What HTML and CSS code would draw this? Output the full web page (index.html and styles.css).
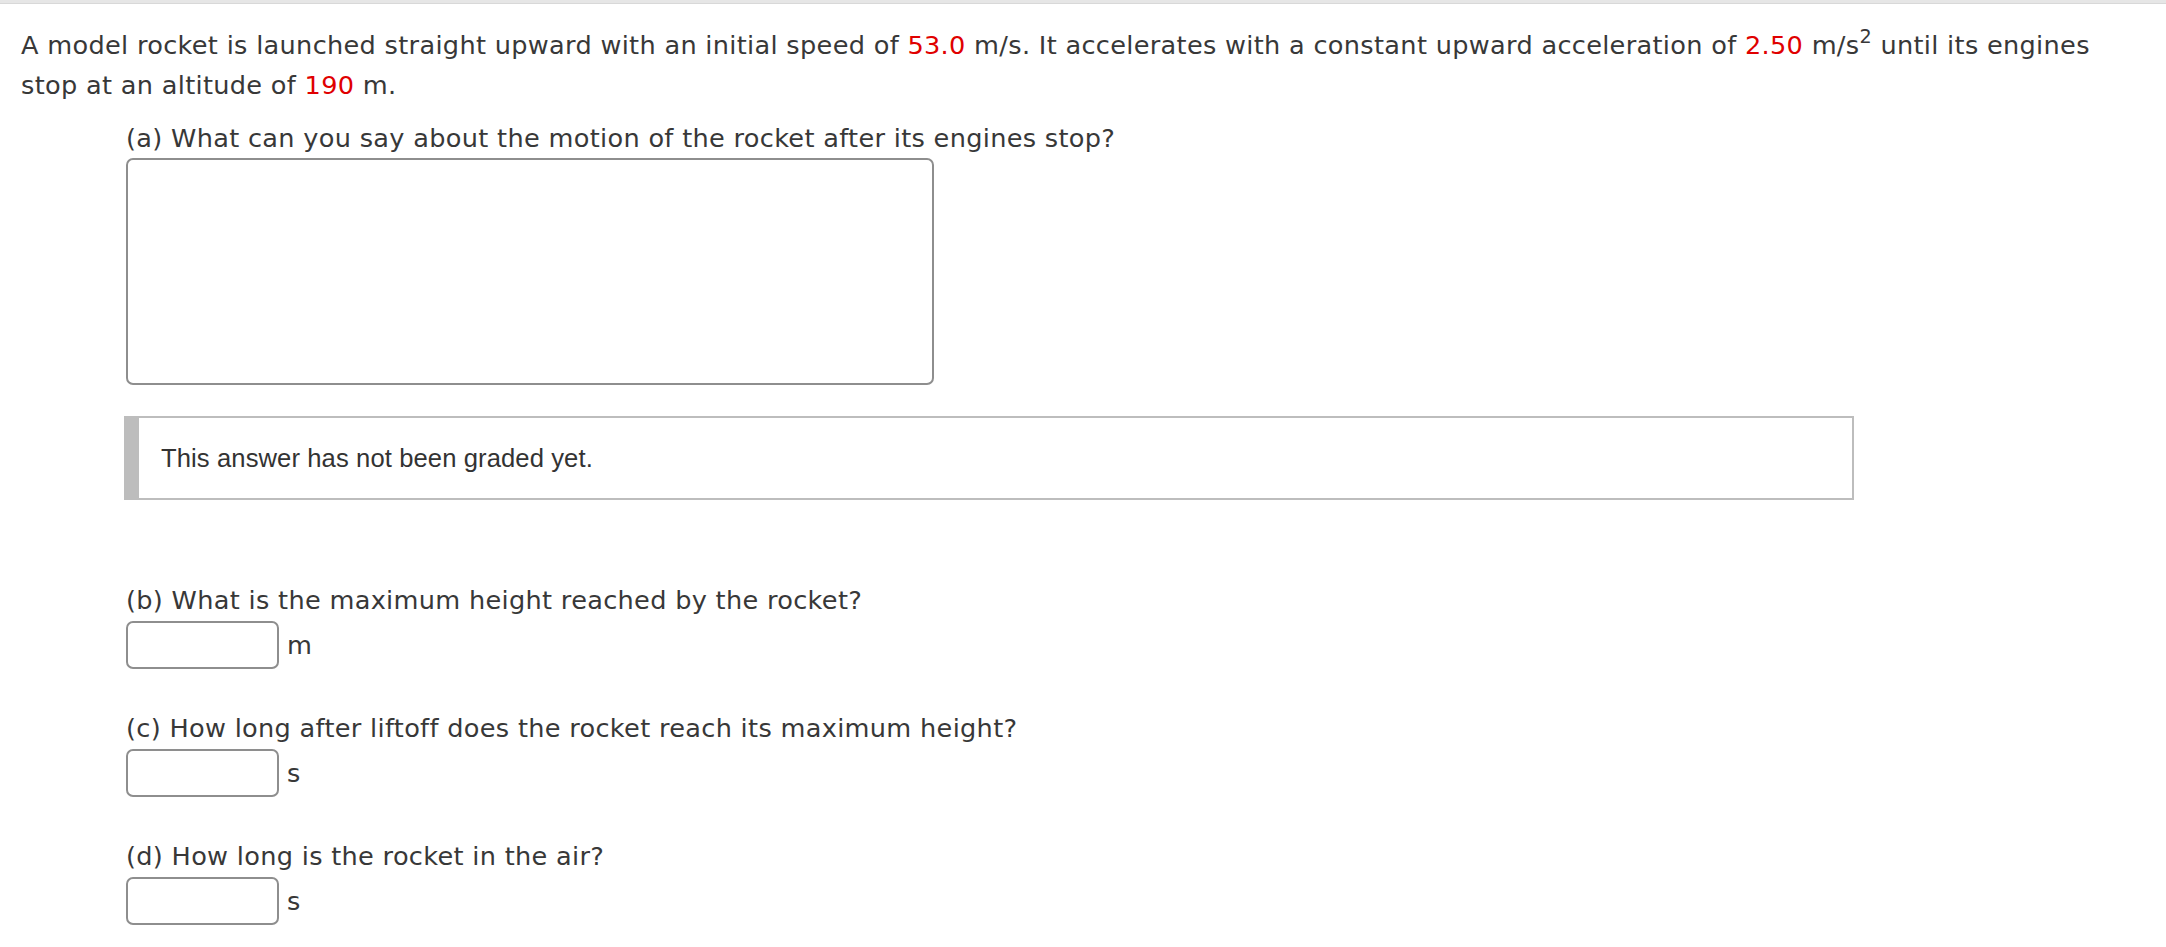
FILE: index.html
```html
<!DOCTYPE html>
<html>
<head>
<meta charset="utf-8">
<link rel="stylesheet" href="styles.css">
</head>
<body>
<div class="topbar"></div>
<div class="question">
  <p class="stem">A model rocket is launched straight upward with an initial speed of <span class="num">53.0</span> m/s. It accelerates with a constant upward acceleration of <span class="num">2.50</span> m/s<sup class="sup">2</sup> until its engines stop at an altitude of <span class="num">190</span> m.</p>
  <div class="parts">
    <div class="part part-a">
      <div class="label">(a) What can you say about the motion of the rocket after its engines stop?</div>
      <textarea class="essay"></textarea>
      <div class="graded"><span class="graded-text">This answer has not been graded yet.</span></div>
    </div>
    <div class="part part-b">
      <div class="label">(b) What is the maximum height reached by the rocket?</div>
      <div class="answer"><input class="numbox" type="text"><span class="unit">m</span></div>
    </div>
    <div class="part">
      <div class="label">(c) How long after liftoff does the rocket reach its maximum height?</div>
      <div class="answer"><input class="numbox" type="text"><span class="unit">s</span></div>
    </div>
    <div class="part">
      <div class="label">(d) How long is the rocket in the air?</div>
      <div class="answer"><input class="numbox" type="text"><span class="unit">s</span></div>
    </div>
  </div>
</div>
</body>
</html>
```
FILE: styles.css
```css
html, body {
  margin: 0;
  padding: 0;
  background: #ffffff;
}
body {
  font-family: "DejaVu Sans", Verdana, sans-serif;
  font-size: 25.6px;
  line-height: 40px;
  letter-spacing: 0.31px;
  color: #383838;
}
.topbar {
  height: 3px;
  background: #e6e6e6;
  border-bottom: 1px solid #d8d8d8;
}
.question {
  padding: 21px 0 0 21px;
  width: 2100px;
}
.stem {
  margin: 0;
}
.num {
  color: #e00000;
}
.sup {
  font-size: 0.75em;
  line-height: 0;
  vertical-align: 0.55em;
}
.parts {
  margin-left: 105px;
  margin-top: 13px;
}
.label {
  white-space: nowrap;
}
.essay {
  display: block;
  box-sizing: border-box;
  width: 808px;
  height: 227px;
  margin: 0;
  border: 2px solid #8e8e8e;
  border-radius: 7px;
  resize: none;
  background: #fff;
}
.graded {
  box-sizing: border-box;
  width: 1730px;
  height: 84px;
  margin: 31px 0 0 -2px;
  border: 2px solid #bdbdbd;
  border-left: 15px solid #bdbdbd;
  display: flex;
  align-items: center;
  padding-left: 22px;
}
.graded-text {
  font-family: "Liberation Sans", Arial, sans-serif;
  font-size: 25.6px;
  letter-spacing: 0.1px;
  color: #333;
}
.part-b {
  margin-top: 80px;
}
.part + .part:not(.part-b) {
  margin-top: 39px;
}
.answer {
  display: flex;
  align-items: center;
  gap: 8px;
  margin-top: 1px;
}
.numbox {
  box-sizing: border-box;
  width: 153px;
  height: 48px;
  margin: 0;
  border: 2px solid #8e8e8e;
  border-radius: 7px;
  background: #fff;
}
.unit {
  line-height: 40px;
}
```
